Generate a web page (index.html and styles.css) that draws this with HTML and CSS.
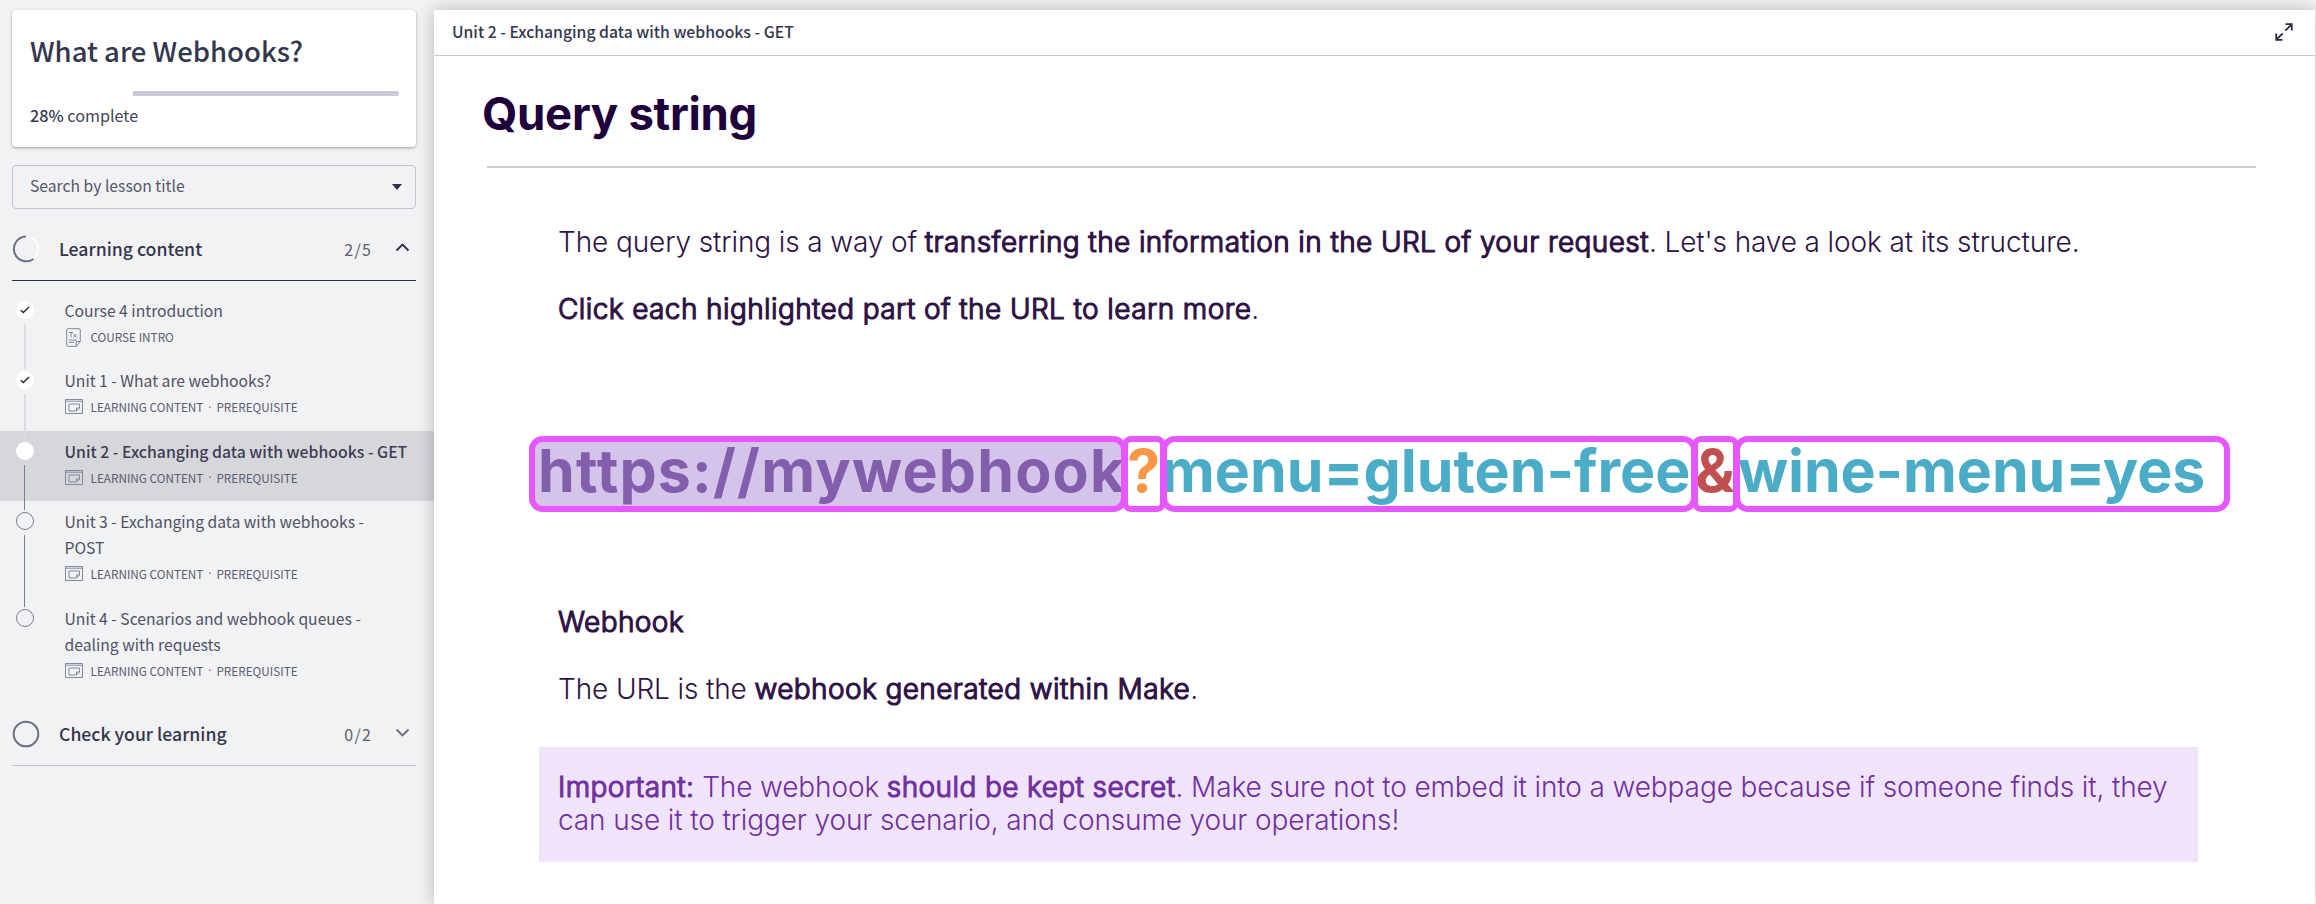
FILE: index.html
```html
<!DOCTYPE html>
<html lang="en">
<head>
<meta charset="utf-8">
<title>What are Webhooks?</title>
<link rel="stylesheet" href="styles.css">
</head>
<body>
<svg width="0" height="0" class="defs">
  <symbol id="lesson" viewBox="0 0 18 15"><path d="M.5.5h17v14H.5zM.5 2.2h17M4 5h10.500v4l-3 3H4zM14.500 9h-3v3" fill="none" stroke="currentColor"/></symbol>
  <symbol id="check" viewBox="0 0 10 8"><path d="M.8 4.200 3.300 6.500 9 1" fill="none" stroke="#222" stroke-width="1.300"/></symbol>
</svg>
<aside class="sidebar">
  <section class="card">
    <h1 class="card-title">What are Webhooks?</h1>
    <div class="progress"><div class="progress-rest"></div></div>
    <p class="complete"><b>28%</b> complete</p>
  </section>
  <div class="search"><span>Search by lesson title</span><svg width="10" height="6" viewBox="0 0 10 6"><path d="M0 0h10L5 6z" fill="#2d2f48"/></svg></div>
  <div class="group group-open">
    <svg class="ring" width="28" height="28" viewBox="0 0 28 28"><circle cx="14" cy="14" r="12.300" fill="none" stroke="#fff" stroke-width="1.600"/><path d="M14 1.500A12.400 12.400 0 1 0 21.500 24" fill="none" stroke="#6c6e84" stroke-width="2"/></svg>
    <h2>Learning content</h2><span class="count">2/5</span>
    <svg class="chev" width="15" height="9" viewBox="0 0 15 9"><path d="M1.500 7.500 7.500 1.500l6 6" fill="none" stroke="#2d2f48" stroke-width="1.800"/></svg>
  </div>
  <ul class="lessons">
    <li class="lesson"><div class="rail"><span class="dot"><svg width="10" height="8"><use href="#check"/></svg></span><i class="line pale"></i></div>
      <div class="info"><h3>Course 4 introduction</h3><p class="meta"><svg class="doc" width="15" height="19" viewBox="0 0 15 19"><path d="M2 .7h11a1.300 1.300 0 0 1 1.300 1.300v11.500l-4 4.800H2A1.300 1.300 0 0 1 .7 17V2A1.300 1.300 0 0 1 2 .7zM14.300 13.500h-4v4.800M3 12h8M3 14.500h5M3 4.500h4M5 4.500v5M7.500 6l3 3.500M10.500 6l-3 3.500" fill="none" stroke="currentColor"/></svg><span>COURSE INTRO</span></p></div></li>
    <li class="lesson"><div class="rail"><span class="dot"><svg width="10" height="8"><use href="#check"/></svg></span><i class="line pale"></i></div>
      <div class="info"><h3>Unit 1 - What are webhooks?</h3><p class="meta"><svg width="18" height="15"><use href="#lesson"/></svg><span>LEARNING CONTENT</span><span class="sep">·</span><span>PREREQUISITE</span></p></div></li>
    <li class="lesson current"><div class="rail"><span class="dot"></span><i class="line"></i></div>
      <div class="info"><h3>Unit 2 - Exchanging data with webhooks - GET</h3><p class="meta"><svg width="18" height="15"><use href="#lesson"/></svg><span>LEARNING CONTENT</span><span class="sep">·</span><span>PREREQUISITE</span></p></div></li>
    <li class="lesson"><div class="rail"><span class="dot hollow"></span><i class="line"></i></div>
      <div class="info"><h3>Unit 3 - Exchanging data with webhooks -<br>POST</h3><p class="meta"><svg width="18" height="15"><use href="#lesson"/></svg><span>LEARNING CONTENT</span><span class="sep">·</span><span>PREREQUISITE</span></p></div></li>
    <li class="lesson"><div class="rail"><span class="dot hollow"></span></div>
      <div class="info"><h3>Unit 4 - Scenarios and webhook queues -<br>dealing with requests</h3><p class="meta"><svg width="18" height="15"><use href="#lesson"/></svg><span>LEARNING CONTENT</span><span class="sep">·</span><span>PREREQUISITE</span></p></div></li>
  </ul>
  <div class="group group-closed">
    <svg class="ring" width="28" height="28" viewBox="0 0 28 28"><circle cx="14" cy="14" r="12.300" fill="none" stroke="#6c6e84" stroke-width="2"/></svg>
    <h2>Check your learning</h2><span class="count">0/2</span>
    <svg class="chev" width="15" height="9" viewBox="0 0 15 9"><path d="M1.500 1.500 7.500 7.500l6-6" fill="none" stroke="#6c6e84" stroke-width="1.800"/></svg>
  </div>
</aside>
<main class="panel">
  <header class="bar"><span>Unit 2 - Exchanging data with webhooks - GET</span>
    <svg width="18" height="18" viewBox="0 0 18 18"><path d="M10.500 1.200h6.300v6.300M16.500 1.500 10.300 7.700M7.500 16.800H1.200v-6.300M1.500 16.500 7.700 10.300" fill="none" stroke="#2d2f48" stroke-width="1.800"/></svg></header>
  <article class="content">
    <h2 class="heading">Query string</h2>
    <p class="para intro">The query string is a way of <b>transferring the information in the URL of your request</b>. Let's have a look at its structure.</p>
    <p class="para hint"><b>Click each highlighted part of the URL to learn more</b>.</p>
    <div class="url">
      <span class="part host">https://mywebhook</span>
      <span class="part mark">?</span>
      <span class="part menu">menu=gluten-free</span>
      <span class="part amp">&amp;</span>
      <span class="part wine">wine-menu=yes</span>
    </div>
    <p class="para term"><b>Webhook</b></p>
    <p class="para desc">The URL is the <b>webhook generated within Make</b>.</p>
    <div class="note"><b>Important:</b> The webhook <b>should be kept secret</b>. Make sure not to embed it into a webpage because if someone finds it, they<br>can use it to trigger your scenario, and consume your operations!</div>
  </article>
</main>
</body>
</html>
```
FILE: styles.css
```css
* { box-sizing: border-box; margin: 0; padding: 0; }
body {
  display: flex; width: 2316px; height: 904px; overflow: hidden;
  background: #f1f2f4; color: #3a3b54;
  font-family: "Noto Sans CJK SC", "Open Sans", sans-serif; font-size: 15.7px;
}
.defs { position: absolute; }
svg { flex: none; display: block; }
.sidebar { width: 434px; flex: none; padding-top: 10px; }
.card {
  margin: 0 18px 18px 12px; height: 137px; padding: 13px 17px 0 18px;
  background: #fff; border-radius: 4px; box-shadow: 0 1px 3px rgba(0,0,0,.35);
}
.card-title { font-size: 27.5px; line-height: 54px; font-weight: 500; color: #34364e; }
.progress { height: 5px; margin-top: 14px; display: flex; justify-content: flex-end; }
.progress-rest { width: 72%; background: #c9cad6; border-radius: 0 3px 3px 0; }
.complete { line-height: 24px; margin-top: 7px; font-size: 16.2px; color: #45465a; }
.complete b { font-weight: 500; color: #34364e; }
.search {
  margin: 0 18px 0 12px; height: 44px; padding: 0 13px 0 17px;
  display: flex; align-items: center; justify-content: space-between;
  border: 1px solid #c3c4d3; border-radius: 4px; color: #55566a;
}
.search span { padding-bottom: 3px; }
.group { display: flex; align-items: center; height: 72px; margin: 0 18px 0 12px; }
.group h2 { flex: 1; margin-left: 19px; font-size: 17.65px; font-weight: 500; line-height: 26px; color: #34364e; }
.count { font-size: 16px; letter-spacing: 1.2px; color: #5c5d72; }
.chev { margin: 0 6px 2px 23px; }
.group-open { height: 72px; padding-top: 8px; border-bottom: 1px solid #2d2f48; }
.group-closed { height: 72px; padding-top: 8px; border-bottom: 1px solid #c3c4d3; }
.lessons { list-style: none; padding-top: 9px; }
.lesson { display: flex; height: 70.300px; }
.lesson:nth-child(n+4) { height: 96.700px; }
.current { background: #d6d7db; }
.rail { width: 49px; padding-top: 11px; display: flex; flex-direction: column; align-items: center; gap: 5px; }
.dot {
  width: 18px; height: 18px; border-radius: 50%; background: #fff;
  display: flex; align-items: center; justify-content: center; flex: none;
}
.hollow { background: none; border: 1px solid #7c7e93; }
.line { flex: 1; width: 1px; margin-bottom: -9px; background: #7c7e93; }
.pale { width: 2px; background: #dcdde0; }
.info { margin-left: 15.500px; padding-top: 8px; }
.info h3 { font-size: 15.700px; line-height: 26px; font-weight: 400; color: #505166; white-space: nowrap; }
.current h3 { font-weight: 500; color: #3c3d55; font-size: 15.800px; }
.meta { display: flex; align-items: center; height: 25px; font-size: 11.750px; color: #5c5d72; }
.meta svg { margin-right: 8px; color: #85879b; }
.meta .doc { margin: 1px 10px 0 1px; }
.sep { width: 13px; text-align: center; font-family: "Open Sans", sans-serif; }

.panel {
  width: 1881px; margin-top: 10px; background: #fff;
  box-shadow: 0 0 16px rgba(0,0,0,.24);
}
.bar {
  height: 46px; padding: 0 22px 0 18px; border-bottom: 1px solid #c6c7d3;
  display: flex; align-items: center; justify-content: space-between;
  font-weight: 500; font-size: 15.750px; color: #34364e;
}
.bar span { padding-bottom: 2px; }
.bar svg { margin-bottom: 2px; }
.content { font-family: Inter, sans-serif; color: #2e1246; }
.heading {
  margin: 0 59px 0 53px; height: 112px; padding-top: 30px;
  border-bottom: 2px solid #d0cbcb; text-indent: -5px;
  font-size: 45.500px; line-height: 56px; font-weight: 700; letter-spacing: -.3px; color: #20003c;
}
.para, .note { font-size: 28px; line-height: 33px; font-weight: 300; letter-spacing: -.12px; white-space: nowrap; }
.para { margin-left: 124px; }
.content b { font-weight: 300; letter-spacing: .4px; -webkit-text-stroke: 1.200px currentColor; }
.intro { margin-top: 58px; }
.hint { margin-top: 34px; }
.url { display: flex; margin: 110px 0 0 95px; height: 76px; font-size: 59px; font-weight: 700; line-height: 70px; }
.part { position: relative; height: 76px; margin-right: -5px; white-space: nowrap; }
.part::after {
  content: ""; position: absolute; inset: 0;
  border: 6px solid #e657ff; border-radius: 14px;
}
.host { width: 598px; padding-left: 9px; background: #d4c4e9; color: #825ead; letter-spacing: 1.200px; border-radius: 14px; }
.mark { width: 44px; padding-left: 5px; color: #f99746; }
.menu { width: 536px; padding-left: 0; color: #4aacc6; }
.amp { width: 47px; padding-left: 3px; color: #c0504d; }
.wine { width: 496px; padding-left: 4px; color: #4aacc6; letter-spacing: -.1px; }
.mark::after, .amp::after { border-radius: 9px; }
.term { margin-top: 94px; }
.desc { margin-top: 34px; }
.note { width: 1659px; height: 115px; margin: 41px 0 0 105px; padding: 24px 0 0 19px; background: #f0e4fb; color: #7030a0; }
```
